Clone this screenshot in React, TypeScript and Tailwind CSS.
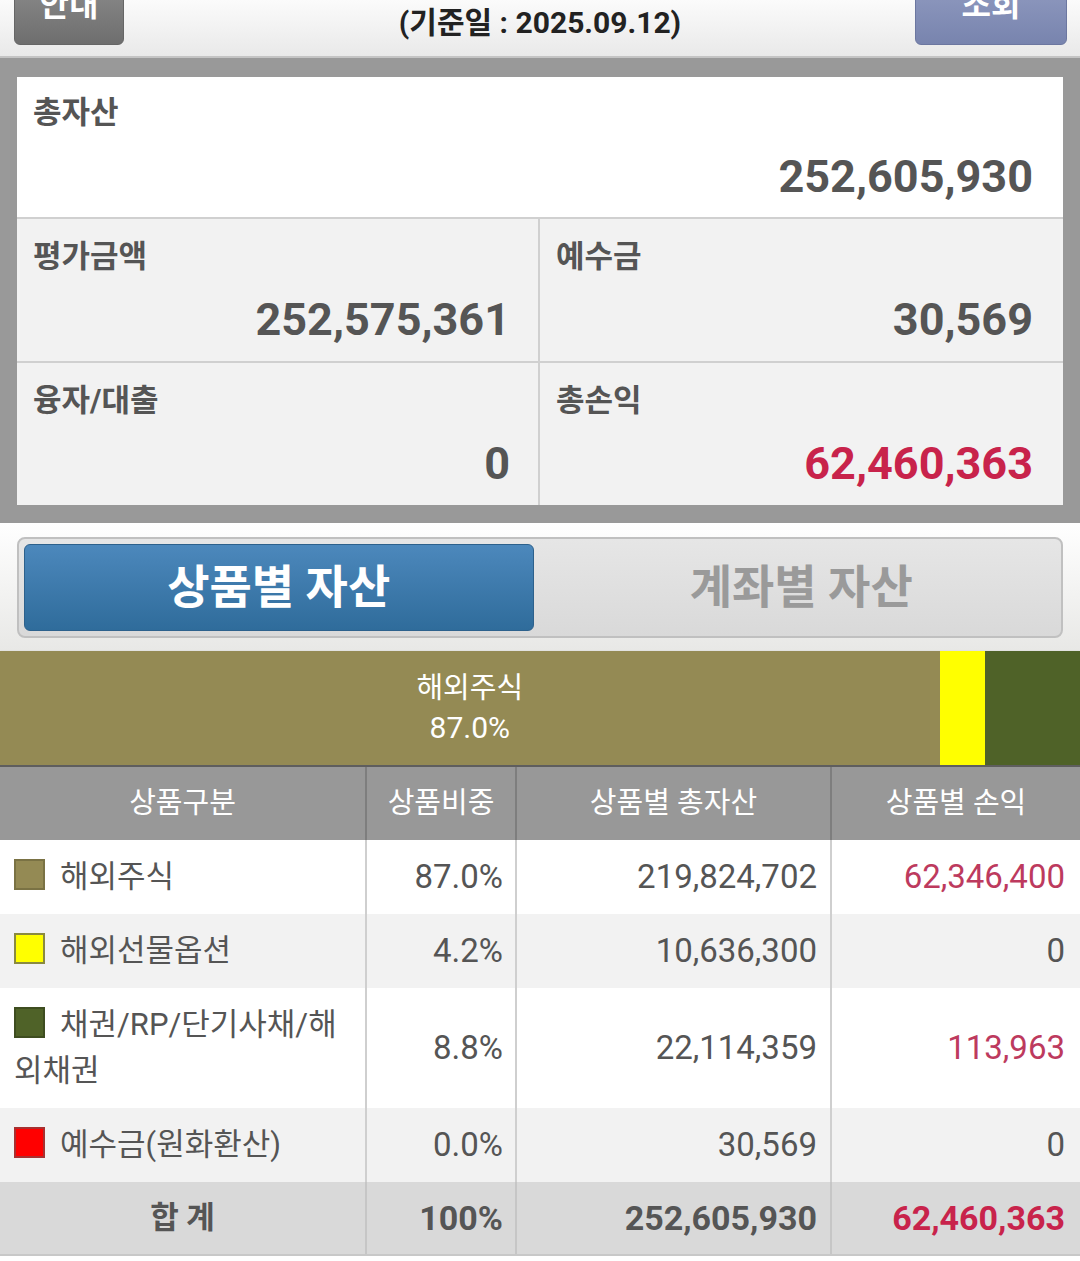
import React from 'react';

const products = [
  { name: '해외주식', weight: '87.0%', pct: 87.0, total: '219,824,702', pnl: '62,346,400', color: '#948a54', border: '#7a7244', red: true },
  { name: '해외선물옵션', weight: '4.2%', pct: 4.2, total: '10,636,300', pnl: '0', color: '#ffff00', border: '#8a8a40', red: false },
  { name: '채권/RP/단기사채/해외채권', weight: '8.8%', pct: 8.8, total: '22,114,359', pnl: '113,963', color: '#4f6228', border: '#3e4d20', red: true },
  { name: '예수금(원화환산)', weight: '0.0%', pct: 0, total: '30,569', pnl: '0', color: '#ff0000', border: '#a83030', red: false },
];

function SummaryCell({ label, value, red, right }: { label: string; value: string; red?: boolean; right?: boolean }) {
  return (
    <div className={`bg-[#f2f2f2] pt-[20px] pb-[15px] pl-[16px] ${right ? 'pr-[30px]' : 'pr-[28px] border-r-2 border-[#d0d0d0]'}`}>
      <div className="text-[31px] leading-[36px] font-bold text-[#555]">{label}</div>
      <div className={`mt-[19px] text-right text-[45px] leading-[52px] font-bold ${red ? 'text-[#c8234b]' : 'text-[#555]'}`}>
        {value}
      </div>
    </div>
  );
}

export default function App() {
  return (
    <div className="w-[1080px] h-[1261px] overflow-hidden bg-white font-[Roboto,'Noto_Sans_CJK_KR',sans-serif]">
      {/* top bar */}
      <div className="h-[58px] grid grid-cols-[1fr_auto_1fr] items-start px-[14px] bg-gradient-to-b from-[#fbfbfb] to-[#e9e9e9] border-b-2 border-[#c4c4c4]">
        <div className="flex">
          <button className="w-[110px] h-[70px] -mt-[25px] pb-[10px] flex items-center justify-center rounded-[6px] bg-gradient-to-b from-[#8e8e8e] to-[#6e6e6e] border border-[#666] text-white text-[32px] font-bold">
            안내
          </button>
        </div>
        <div className="pt-[5px] text-[30px] leading-[36px] font-bold text-[#222]">(기준일 : 2025.09.12)</div>
        <div className="flex justify-end">
          <button className="w-[152px] h-[70px] -mt-[25px] -mr-[1px] pb-[10px] flex items-center justify-center rounded-[6px] bg-gradient-to-b from-[#939dc2] to-[#7884ae] border border-[#6c77a0] text-white text-[32px] font-bold">
            조회
          </button>
        </div>
      </div>

      {/* summary */}
      <div className="bg-[#999999] pt-[19px] pb-[18px] pl-[17px] pr-[17px]">
        <div className="bg-white">
          <div className="pt-[18px] pb-[14px] pl-[16px] pr-[30px] border-b-2 border-[#d0d0d0]">
            <div className="text-[31px] leading-[36px] font-bold text-[#555]">총자산</div>
            <div className="mt-[20px] text-right text-[45px] leading-[52px] font-bold text-[#555]">252,605,930</div>
          </div>
          <div className="grid grid-cols-2">
            <div className="border-b-2 border-[#d0d0d0]">
              <SummaryCell label="평가금액" value="252,575,361" />
            </div>
            <div className="border-b-2 border-[#d0d0d0]">
              <SummaryCell label="예수금" value="30,569" right />
            </div>
            <SummaryCell label="융자/대출" value="0" />
            <SummaryCell label="총손익" value="62,460,363" red right />
          </div>
        </div>
      </div>

      {/* tabs */}
      <div className="h-[128px] pt-[14px] px-[17px] bg-gradient-to-b from-white to-[#e8e8e6]">
        <div className="h-[101px] grid grid-cols-2 gap-[13px] p-[5px] rounded-[8px] border-2 border-[#c0c0c0] bg-gradient-to-b from-[#e6e6e6] to-[#d9d9d9]">
          <div className="flex items-center justify-center rounded-[6px] border border-[#2d618c] bg-gradient-to-b from-[#4c88bc] to-[#2f6c9b] text-white text-[46px] font-bold">
            상품별 자산
          </div>
          <div className="flex items-center justify-center text-[#9a9a9a] text-[46px] font-bold">계좌별 자산</div>
        </div>
      </div>

      {/* bar */}
      <div className="h-[116px] flex border-b-2 border-[#5e5e5e] shadow-[0_1px_2px_rgba(0,0,0,0.35)]">
        {products.filter(p => p.pct > 0).map((p, i) => (
          <div
            key={p.name}
            className="h-full flex flex-col items-center justify-center text-white text-[29px] leading-[39px]"
            style={{ width: `${p.pct}%`, backgroundColor: p.color }}
          >
            {i === 0 && (
              <>
                <span>{p.name}</span>
                <span className="text-[30px]">{p.weight}</span>
              </>
            )}
          </div>
        ))}
      </div>

      {/* table */}
      <div className="text-[#555]">
        <div className="grid grid-cols-[367px_150px_315px_248px] h-[73px] bg-[#989898] text-white text-[29px]">
          <div className="flex items-center justify-center border-r-2 border-[#7e7e7e]">상품구분</div>
          <div className="flex items-center justify-center border-r-2 border-[#7e7e7e]">상품비중</div>
          <div className="flex items-center justify-center border-r-2 border-[#7e7e7e]">상품별 총자산</div>
          <div className="flex items-center justify-center">상품별 손익</div>
        </div>
        {products.map((p, i) => (
          <div
            key={p.name}
            className={`grid grid-cols-[367px_150px_315px_248px] text-[33px] leading-[46px] ${i % 2 === 1 ? 'bg-[#f2f2f2]' : 'bg-white'}`}
          >
            <div className="py-[14px] pl-[14px] pr-[16px] text-[31px] border-r-2 border-[#cfcfcf]">
              <span
                className="inline-block w-[31px] h-[31px] mr-[15px] align-[-3px] border-2"
                style={{ backgroundColor: p.color, borderColor: p.border }}
              />
              {p.name}
            </div>
            <div className="py-[14px] pr-[12px] flex items-center justify-end border-r-2 border-[#cfcfcf]">{p.weight}</div>
            <div className="py-[14px] pr-[13px] flex items-center justify-end border-r-2 border-[#cfcfcf]">{p.total}</div>
            <div className={`py-[14px] pr-[15px] flex items-center justify-end ${p.red ? 'text-[#bd3a5e]' : ''}`}>{p.pnl}</div>
          </div>
        ))}
        <div className="grid grid-cols-[367px_150px_315px_248px] h-[74px] bg-[#d9d9d9] text-[34px] font-bold border-b-2 border-[#c8c8c8]">
          <div className="flex items-center justify-center text-[31px] border-r-2 border-[#c6c6c6]">합 계</div>
          <div className="pr-[12px] flex items-center justify-end border-r-2 border-[#c6c6c6]">100%</div>
          <div className="pr-[13px] flex items-center justify-end border-r-2 border-[#c6c6c6]">252,605,930</div>
          <div className="pr-[15px] flex items-center justify-end text-[#c8234b]">62,460,363</div>
        </div>
      </div>
    </div>
  );
}
